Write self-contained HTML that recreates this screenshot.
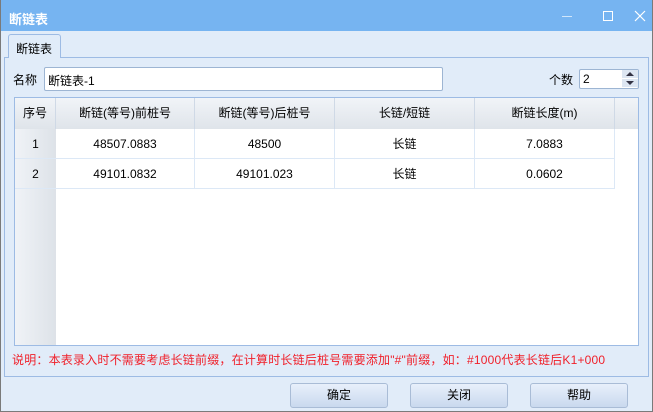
<!DOCTYPE html>
<html><head><meta charset="utf-8"><style>
*{box-sizing:border-box;margin:0;padding:0}
body{width:653px;height:412px;overflow:hidden;background:#e1ecf9;font-family:"Liberation Sans","Noto Sans CJK SC",sans-serif;font-size:12px;color:#000;position:relative}
.abs{position:absolute}
.title{left:0;top:0;width:653px;height:31px;background:#76b4f1;color:#fff;font-size:13px;font-weight:bold;padding:9px 0 0 9px}
.frame{left:0;top:0;width:653px;height:412px;border:1px solid #7a7a7a;border-top:none}
.tab{left:8px;top:34px;width:53px;height:24px;background:#e1ecf9;border:1px solid #9dbbe4;border-bottom:none;border-radius:3px 3px 0 0;padding:5px 0 0 7px;z-index:2}
.panel{left:4px;top:57px;width:645px;height:320px;border:1px solid #9dbbe4}
.input{background:#fff;border:1px solid #9db5d3;border-radius:2px}
.grid{left:14px;top:97px;width:625px;height:249px;border:1px solid #9dbbe4;background:#fff;overflow:hidden}
.hd{position:absolute;top:0;height:31px;background:linear-gradient(#f1f4f8,#dfe4ea);border-right:1px solid #cfd9e6;text-align:center;line-height:31px}
.cell{position:absolute;height:30px;border-right:1px solid #dce8f6;border-bottom:1px solid #dce8f6;text-align:center;line-height:30px}
.rh{position:absolute;left:0;width:41px;background:linear-gradient(90deg,#f0f3f7,#dde2e8)}
.btn{top:383px;height:25px;width:98px;border:1px solid #a9bcd6;border-radius:3px;background:linear-gradient(#e8f0fb,#c9d9ee);text-align:center;line-height:23px}
</style></head><body>
<div class="abs title">断链表</div>
<svg class="abs" style="left:560px;top:8px" width="90" height="16"><line x1="2" y1="8.5" x2="12" y2="8.5" stroke="#d0e6fb" stroke-width="1"/><rect x="43.5" y="3.5" width="9" height="9" fill="none" stroke="#fff"/><path d="M75 3 L85 13 M85 3 L75 13" stroke="#fff" stroke-width="1.2"/></svg>
<div class="abs frame"></div>
<div class="abs panel"></div>
<div class="abs tab">断链表</div>
<div class="abs" style="left:13px;top:71px">名称</div>
<div class="abs input" style="left:44px;top:67px;width:399px;height:24px;padding:4px 0 0 3px">断链表-1</div>
<div class="abs" style="left:549px;top:71px">个数</div>
<div class="abs input" style="left:579px;top:69px;width:60px;height:20px;padding:2px 0 0 3px">2</div>
<svg class="abs" style="left:622px;top:70px" width="16" height="18"><rect x="0" y="0" width="16" height="8" fill="#dde6f2"/><rect x="0" y="9" width="16" height="8" fill="#dde6f2"/><path d="M4 6 L8 2 L12 6Z M4 11 L12 11 L8 15Z" fill="#334"/></svg>
<div class="abs grid">
<div class="rh" style="top:0;height:249px"></div>
<div class="hd" style="left:0;width:41px">序号</div>
<div class="hd" style="left:41px;width:139px">断链(等号)前桩号</div>
<div class="hd" style="left:180px;width:140px">断链(等号)后桩号</div>
<div class="hd" style="left:320px;width:140px">长链/短链</div>
<div class="hd" style="left:460px;width:140px">断链长度(m)</div>
<div class="hd" style="left:600px;width:25px;border-right:none"></div>
<div class="cell" style="left:0;top:31px;width:41px;border-right:none">1</div>
<div class="cell" style="left:41px;top:31px;width:139px">48507.0883</div>
<div class="cell" style="left:180px;top:31px;width:140px">48500</div>
<div class="cell" style="left:320px;top:31px;width:140px">长链</div>
<div class="cell" style="left:460px;top:31px;width:140px">7.0883</div>
<div class="cell" style="left:0;top:61px;width:41px;border-right:none">2</div>
<div class="cell" style="left:41px;top:61px;width:139px">49101.0832</div>
<div class="cell" style="left:180px;top:61px;width:140px">49101.023</div>
<div class="cell" style="left:320px;top:61px;width:140px">长链</div>
<div class="cell" style="left:460px;top:61px;width:140px">0.0602</div>
</div>
<div class="abs" style="left:12px;top:351px;color:#f0202a;letter-spacing:0.2px">说明：本表录入时不需要考虑长链前缀，在计算时长链后桩号需要添加"#"前缀，如：#1000代表长链后K1+000</div>
<div class="abs btn" style="left:290px">确定</div>
<div class="abs btn" style="left:410px">关闭</div>
<div class="abs btn" style="left:530px">帮助</div>
</body></html>
